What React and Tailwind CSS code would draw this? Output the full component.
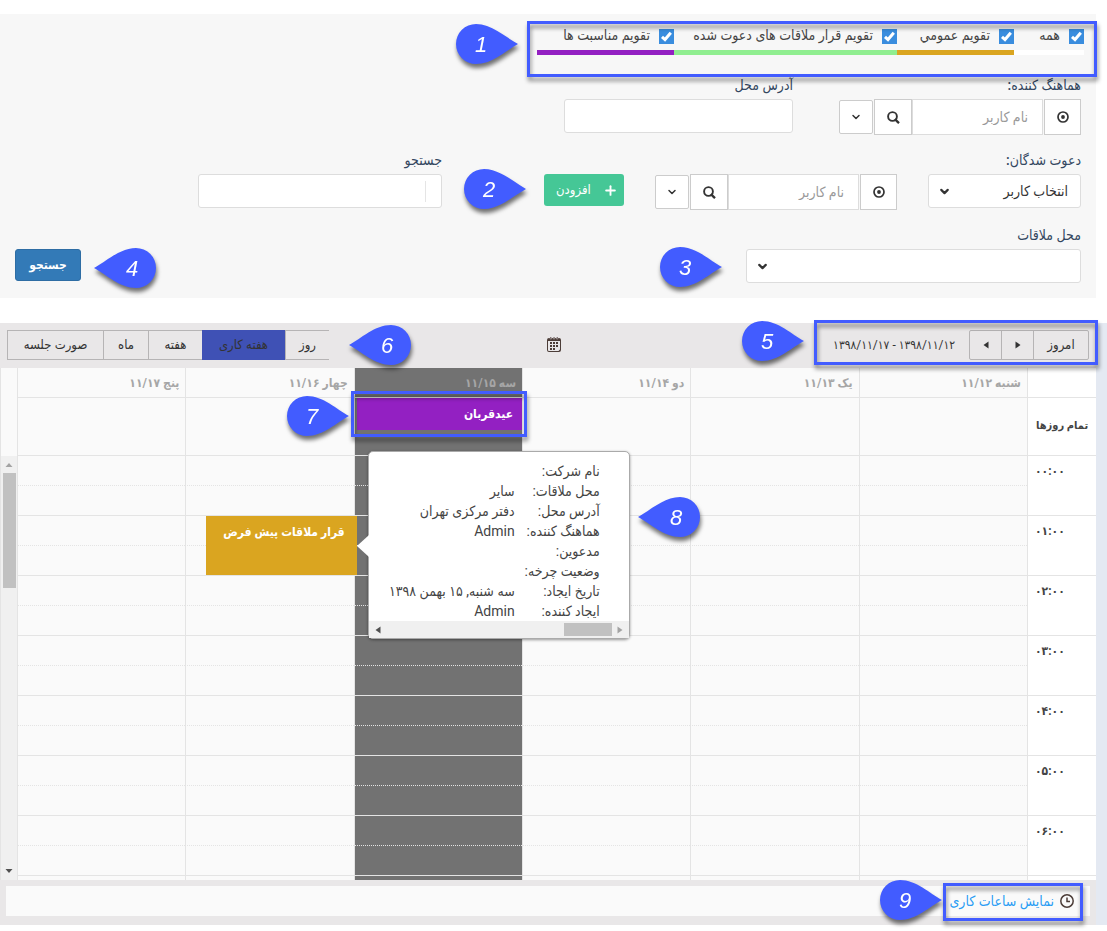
import React from "react";
import { ChevronDown, Plus } from "lucide-react";

const calendars = [
  { label: "همه", width: "w-[70px]", bar: "bg-white" },
  { label: "تقویم عمومي", width: "w-[117px]", bar: "bg-[#daa520]" },
  { label: "تقویم قرار ملاقات های دعوت شده", width: "w-[223px]", bar: "bg-[#90ee90]" },
  { label: "تقویم مناسبت ها", width: "w-[137px]", bar: "bg-[#9320c2]" },
];

const days = ["شنبه ۱۱/۱۲", "یک ۱۱/۱۳", "دو ۱۱/۱۴", "سه ۱۱/۱۵", "چهار ۱۱/۱۶", "پنج ۱۱/۱۷"];
const today = 3;
const hours = ["۰۰:۰۰", "۰۱:۰۰", "۰۲:۰۰", "۰۳:۰۰", "۰۴:۰۰", "۰۵:۰۰", "۰۶:۰۰"];

const details = [
  ["نام شرکت:", ""],
  ["محل ملاقات:", "سایر"],
  ["آدرس محل:", "دفتر مرکزی تهران"],
  ["هماهنگ کننده:", "Admin"],
  ["مدعوین:", ""],
  ["وضعیت چرخه:", ""],
  ["تاریخ ایجاد:", "سه شنبه, ۱۵ بهمن ۱۳۹۸"],
  ["ایجاد کننده:", "Admin"],
];

const views = [
  { label: "روز", width: "w-[44px]" },
  { label: "هفته کاری", width: "w-[83px]", active: true },
  { label: "هفته", width: "w-[54px]" },
  { label: "ماه", width: "w-[45px]" },
  { label: "صورت جلسه", width: "w-[96px]" },
];

function Marker({ n, flip = false, className }) {
  return (
    <svg
      width="62"
      height="40"
      viewBox="0 0 62 40"
      className={`pointer-events-none absolute z-40 overflow-visible drop-shadow-[1px_4px_2px_rgba(0,0,0,0.55)] ${className}`}
    >
      <path
        d="M62 20C50 13.500 36 0 20 0A20 20 0 0 0 20 40C36 40 50 26.500 62 20Z"
        fill="#425cff"
        transform={flip ? "matrix(-1 0 0 1 62 0)" : undefined}
      />
      <text
        x={flip ? 38 : 25}
        y="28"
        direction="ltr"
        textAnchor="middle"
        fill="#fff"
        className="font-['Liberation_Sans'] text-[22px] font-normal italic"
      >
        {n}
      </text>
    </svg>
  );
}

function Frame({ className }) {
  return (
    <div
      className={`pointer-events-none absolute z-30 border-3 border-[#425cff] drop-shadow-[1px_4px_2px_rgba(0,0,0,0.45)] ${className}`}
    />
  );
}

function Triangle({ dir, className = "" }) {
  const d = { left: "M6.500 0.500V7.500L1.500 4Z", right: "M1.500 0.500V7.500L6.500 4Z", up: "M0.500 6H7.500L4 2Z", down: "M0.500 2H7.500L4 6Z" }[dir];
  return (
    <svg width="8" height="8" viewBox="0 0 8 8" className={className} fill="currentColor">
      <path d={d} />
    </svg>
  );
}

function TargetIcon() {
  return (
    <svg width="12" height="12" viewBox="0 0 12 12" fill="none" stroke="#333">
      <circle cx="6" cy="6" r="5" strokeWidth="1.700" />
      <circle cx="6" cy="6" r="1.900" fill="#333" stroke="none" />
    </svg>
  );
}

function SearchIcon() {
  return (
    <svg width="13" height="13" viewBox="0 0 13 13" fill="none" stroke="#333">
      <circle cx="5.500" cy="5.500" r="4.400" strokeWidth="1.900" />
      <path d="M7.800 8.200L12 12.200" strokeWidth="2.300" />
    </svg>
  );
}

function Label({ htmlFor, children }) {
  return (
    <label htmlFor={htmlFor} className="flex h-[22px] items-start leading-4 font-medium whitespace-nowrap text-[#33475f]">
      {children}
    </label>
  );
}

function UserPicker({ id }) {
  return (
    <div className="flex w-[242px] items-center gap-px">
      <button aria-label="انتخاب" className="flex h-9 w-[37px] items-center justify-center border border-[#ccc] bg-white">
        <TargetIcon />
      </button>
      <div className="flex flex-1">
        <input
          id={id}
          aria-label="نام کاربر"
          placeholder="نام کاربر"
          className="h-9 w-0 flex-1 border border-[#ddd] bg-white px-[14px] placeholder:text-[#999]"
        />
        <button aria-label="جستجوی کاربر" className="flex h-9 w-[38px] items-center justify-center border border-[#ccc] bg-white">
          <SearchIcon />
        </button>
      </div>
      <button aria-label="گزینه ها" className="flex h-[34px] w-[34px] items-center justify-center rounded-xs border border-[#ccc] bg-white">
        <ChevronDown size={12} strokeWidth={3} />
      </button>
    </div>
  );
}

function SelectBox({ id, children }) {
  return (
    <div className="relative">
      <select
        id={id}
        className="h-[34px] w-full appearance-none rounded-[3px] border border-[#ddd] bg-white pr-3 pl-8 text-[#333]"
      >
        {children}
      </select>
      <ChevronDown size={13} strokeWidth={4} className="pointer-events-none absolute top-[11px] left-[10px]" />
    </div>
  );
}

function FilterForm() {
  return (
    <form className="mr-[11px] bg-[#f7f7f7] pt-[10px] pr-3 pb-[15px] pl-[15px]" onSubmit={(e) => e.preventDefault()}>
      <div className="relative mb-[22px] flex h-[31px] w-fit">
        {calendars.map((c) => (
          <label key={c.label} className={`flex flex-col justify-between ${c.width}`}>
            <span className="flex gap-[9px] whitespace-nowrap text-[#444]">
              <span className="relative mt-[5px] size-[15px] shrink-0">
                <input type="checkbox" defaultChecked className="block size-[15px] appearance-none bg-[#3a8dde]" />
                <svg viewBox="0 0 15 15" className="pointer-events-none absolute inset-0" fill="none" stroke="#fff" strokeWidth="3">
                  <path d="M3 7.800L6 10.500L11.800 3.800" />
                </svg>
              </span>
              <span className="leading-[22px]">{c.label}</span>
            </span>
            <span className={`h-[5px] ${c.bar}`} />
          </label>
        ))}
        <Frame className="-top-[3px] -right-[13px] -bottom-[22px] -left-[10px]" />
        <Marker n="1" className="top-0 -left-[81px]" />
      </div>

      <div className="pr-[3px]">
        <div className="flex h-[75px] gap-[46px]">
          <div>
            <Label htmlFor="coordinator">هماهنگ کننده:</Label>
            <UserPicker id="coordinator" />
          </div>
          <div className="w-[229px]">
            <Label htmlFor="address">آدرس محل</Label>
            <input id="address" className="h-[34px] w-full rounded-[3px] border border-[#ddd] bg-white px-3" />
          </div>
        </div>

        <div className="flex h-[75px]">
          <div className="w-[153px]">
            <Label htmlFor="invitees">دعوت شدگان:</Label>
            <SelectBox id="invitees">
              <option>انتخاب کاربر</option>
            </SelectBox>
          </div>
          <div className="mr-[31px] pt-[22px]">
            <UserPicker id="invitee-user" />
          </div>
          <div className="relative mr-[31px] pt-[22px]">
            <button className="flex h-8 w-20 items-center justify-between rounded-[3px] bg-[#45c796] pr-[6px] pl-3 text-[13px] font-medium text-white">
              <Plus size={15} strokeWidth={3} />
              افزودن
            </button>
            <Marker n="2" className="top-[17px] -left-[80px]" />
          </div>
          <div className="mr-[102px] w-[244px]">
            <Label htmlFor="query">جستجو</Label>
            <div className="flex h-[34px] items-center rounded-[3px] border border-[#ddd] bg-white">
              <span className="h-[21px] w-4 border-l border-[#e5e5e5]" />
              <input id="query" className="h-full w-0 flex-1 px-2 outline-none" />
            </div>
          </div>
        </div>

        <div className="flex items-start justify-between">
          <div className="relative w-[335px]">
            <Label htmlFor="place">محل ملاقات</Label>
            <SelectBox id="place">
              <option></option>
            </SelectBox>
            <Marker n="3" className="top-5 -left-[86px]" />
          </div>
          <div className="relative pt-[22px]">
            <button className="h-8 w-[66px] rounded-[3px] border border-[#2e6da4] bg-[#337ab7] text-[12px] font-bold text-white">جستجو</button>
            <Marker n="4" flip className="top-[21px] left-[79px]" />
          </div>
        </div>
      </div>
    </form>
  );
}

function CalendarIcon() {
  return (
    <svg width="14" height="15" viewBox="0 0 14 15" fill="#4c3d38">
      <path fillRule="evenodd" d="M2 1H12Q14 1 14 3V13Q14 15 12 15H2Q0 15 0 13V3Q0 1 2 1ZM1 4V13Q1 14 2 14H11.500L13 12.500V4Z" />
      <path d="M3 0H4.500V2H3ZM6.300 0H7.800V2H6.300ZM9.500 0H11V2H9.500Z" stroke="#e9e7e8" strokeWidth=".4" />
      <path d="M6 5H8V7H6ZM9 5H11V7H9ZM3 5H5V7H3ZM3 8H5V10H3ZM6 8H8V10H6ZM9 8H11V10H9ZM3 11H5V13H3ZM6 11H8V13H6Z" />
    </svg>
  );
}

function Toolbar() {
  return (
    <div className="relative z-30 grid h-[45px] grid-cols-[1fr_auto_1fr] items-start bg-[#e9e7e8] px-[7px] pt-[7px] text-[#333]">
      <div className="relative flex w-fit items-center">
        <div className="flex h-[30px] rounded-xs border border-[#b6b4b5]">
          <button className="w-[54px] text-[13px]">امروز</button>
          <button aria-label="هفته قبل" className="flex w-8 items-center justify-center border-r border-[#b6b4b5]">
            <Triangle dir="right" />
          </button>
          <button aria-label="هفته بعد" className="flex w-8 items-center justify-center border-r border-[#b6b4b5]">
            <Triangle dir="left" />
          </button>
        </div>
        <span className="mr-[14px] w-[122px] text-[12px] whitespace-nowrap">۱۳۹۸/۱۱/۱۲ - ۱۳۹۸/۱۱/۱۷</span>
        <Frame className="-top-[10px] -right-[9px] -bottom-[5px] -left-[19px]" />
        <Marker n="5" className="-top-[9px] -left-[91px]" />
      </div>
      <button aria-label="تقویم" className="flex h-7 items-center pl-3">
        <CalendarIcon />
      </button>
      <div className="relative mr-auto flex h-[30px]">
        {views.map((v) => (
          <button
            key={v.label}
            className={
              v.active
                ? `${v.width} border border-[#3f51b5] bg-[#3f51b5] text-[13px] whitespace-nowrap`
                : `${v.width} border-y border-l border-[#b6b4b5] text-[13px] whitespace-nowrap`
            }
          >
            {v.label}
          </button>
        ))}
        <Marker n="6" flip className="-top-[5px] -right-[82px]" />
      </div>
    </div>
  );
}

function DetailsPopup() {
  return (
    <div className="absolute -top-[65px] left-full z-20 ml-[11px] w-[262px] rounded-[5px] border border-[#aaa] bg-white text-[14px] font-normal text-[#444] shadow-[0_1px_3px_rgba(0,0,0,0.4)]">
      <svg width="12" height="22" viewBox="0 0 12 22" className="absolute top-[83px] -left-[12px]" fill="#fff">
        <path d="M12 0V22L0 11Z" />
      </svg>
      <dl className="grid grid-cols-[85px_1fr] pt-[9px] pr-[29px] leading-5">
        {details.map(([k, v]) => (
          <React.Fragment key={k}>
            <dt className="whitespace-nowrap">{k}</dt>
            <dd className="whitespace-nowrap">{v}</dd>
          </React.Fragment>
        ))}
      </dl>
      <div className="flex h-[17px] items-center bg-[#f0f0f0] px-[5px]">
        <Triangle dir="right" className="text-[#a3a3a3]" />
        <span className="mr-1 h-[13px] w-12 bg-[#c1c1c1]" />
        <Triangle dir="left" className="mr-auto text-[#505050]" />
      </div>
      <Marker n="8" flip className="top-[45px] left-[269px]" />
    </div>
  );
}

function DefaultMeeting() {
  return (
    <div className="absolute top-0 -right-[3px] left-5 z-10 h-[59px] bg-[#daa520] px-3 pt-[6px] font-bold text-white">
      <div className="leading-5 whitespace-nowrap">قرار ملاقات پیش فرض</div>
      <DetailsPopup />
    </div>
  );
}

function cellColor(i) {
  return i === today ? "bg-[#727272]" : "bg-[#fafafa]";
}

function WeekTable() {
  return (
    <table className="w-0 flex-1 table-fixed border-separate border-spacing-0 text-[12px]">
      <thead>
        <tr className="h-[30px]">
          <th aria-label="ساعت" className="w-[69px] border-b border-l border-[#e4e4e4] bg-white p-0" />
          {days.map((d, i) => (
            <th key={d} className={`border-b border-l border-[#e4e4e4] p-0 pr-[6px] text-right font-bold text-[#a6a6a6] ${cellColor(i)}`}>
              {d}
            </th>
          ))}
        </tr>
      </thead>
      <tbody>
        <tr className="h-[58px]">
          <th className="border-b border-l border-[#e4e4e4] bg-white p-0 pl-2 text-left text-[11px] font-bold whitespace-nowrap text-[#444]">
            تمام روزها
          </th>
          {days.map((d, i) => (
            <td key={d} className={`relative border-b border-l border-[#e4e4e4] p-0 ${cellColor(i)}`}>
              {i === today && (
                <div className="absolute top-0 right-0 left-[2px] z-10 h-8 bg-[#9320c2] pr-[9px] leading-8 font-bold text-white">
                  عیدقربان
                  <Frame className="-top-[7px] -right-[5px] -bottom-[7px] -left-[6px]" />
                  <Marker n="7" className="-top-[2px] -left-[70px]" />
                </div>
              )}
            </td>
          ))}
        </tr>
        {hours.map((h, row) => (
          <React.Fragment key={h}>
            <tr className="h-[30px]">
              <th
                rowSpan={2}
                dir="ltr"
                className="border-b border-l border-[#e4e4e4] bg-white p-0 pt-[5px] pl-2 text-left align-top leading-5 font-bold text-[#444]"
              >
                {h}
              </th>
              {days.map((d, i) => (
                <td key={d} className={`relative border-b border-l border-[#e4e4e4] p-0 [border-bottom-style:dotted] ${cellColor(i)}`}>
                  {row === 1 && i === 4 && <DefaultMeeting />}
                </td>
              ))}
            </tr>
            <tr className="h-[30px]">
              {days.map((d, i) => (
                <td key={d} className={`border-b border-l border-[#e4e4e4] p-0 ${cellColor(i)}`} />
              ))}
            </tr>
          </React.Fragment>
        ))}
        <tr className="h-1">
          <td className="border-l border-[#e4e4e4] bg-white p-0" />
          {days.map((d, i) => (
            <td key={d} className={`border-l border-[#e4e4e4] p-0 ${cellColor(i)}`} />
          ))}
        </tr>
      </tbody>
    </table>
  );
}

function Scheduler() {
  return (
    <section className="mt-[25px] bg-[#e4e9f2] pr-[11px]">
      <Toolbar />
      <div className="flex">
        <WeekTable />
        <div className="flex w-[17px] flex-col border-l border-[#e4e4e4] bg-[#fafafa] pt-[88px]">
          <div className="flex flex-1 flex-col items-center bg-[#f0f0f0] pt-[5px] pb-[5px]">
            <Triangle dir="up" className="text-[#a3a3a3]" />
            <span className="mt-1 h-[115px] w-[13px] bg-[#c1c1c1]" />
            <Triangle dir="down" className="mt-auto text-[#505050]" />
          </div>
        </div>
      </div>
      <footer className="h-[45px] bg-[#e9e7e8] px-[6px] pt-[6px]">
        <div className="h-[30px] bg-[#fafafa] pr-4">
          <div className="relative flex h-full w-fit items-center">
            <a href="#hours" className="flex w-[124px] items-center gap-[6px] whitespace-nowrap text-[#2a9df4]">
              <svg width="14" height="14" viewBox="0 0 14 14" fill="none" stroke="#4c3d38" strokeWidth="1.500" className="shrink-0">
                <circle cx="7" cy="7" r="6.200" />
                <path d="M7 3.500V7.500H10" />
              </svg>
              نمایش ساعات کاری
            </a>
            <Frame className="-top-[3px] -right-[9px] -bottom-[5px] -left-[7px]" />
            <Marker n="9" className="-top-[6px] -left-[70px]" />
          </div>
        </div>
      </footer>
    </section>
  );
}

export default function App() {
  return (
    <main
      dir="rtl"
      lang="fa"
      className="w-full overflow-x-hidden bg-white pt-[14px] pb-[6px] font-[Roboto,'DejaVu_Sans_Condensed','DejaVu_Sans',sans-serif] text-[14px] text-[#333]"
    >
      <FilterForm />
      <Scheduler />
    </main>
  );
}
